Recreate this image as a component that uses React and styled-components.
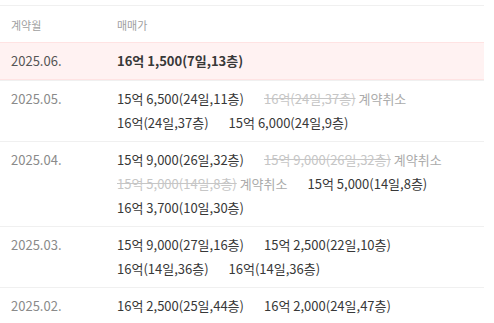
import React from 'react'
import styled, { createGlobalStyle } from 'styled-components'

const GlobalStyle = createGlobalStyle`
  body {
    margin: 0;
    background: #fff;
    font-family: 'Noto Sans CJK KR', 'Noto Sans', sans-serif;
  }
`

const Page = styled.div`
  padding-top: 5px;
`

const Table = styled.div`
  width: 484px;
  border-top: 1px solid #f0f0f0;
`

const HeaderRow = styled.div`
  display: flex;
  height: 36px;
  box-sizing: border-box;
  align-items: flex-end;
  padding-bottom: 9px;
  font-size: 11px;
  line-height: 16px;
  color: #a0a0a0;
`

const Row = styled.div`
  display: flex;
  align-items: flex-start;
  padding: 6px 0;
  border-top: 1px solid ${(p) => (p.$highlight ? '#ffe3e3' : '#f0f0f0')};
  border-bottom: ${(p) => (p.$highlight ? '1px solid #ffe3e3' : '0')};
  background: ${(p) => (p.$highlight ? '#fff2f2' : 'transparent')};
  & + & {
    border-top: ${(p) => (p.$afterHighlight ? '0' : '1px solid #f0f0f0')};
  }
`

const MonthCell = styled.div`
  width: 106px;
  padding-left: 11px;
  flex-shrink: 0;
  font-size: 13px;
  line-height: 24px;
  color: ${(p) => (p.$highlight ? '#555' : '#8a8a8a')};
`

const HeaderCell = styled.div`
  width: ${(p) => (p.$first ? '106px' : 'auto')};
  padding-left: ${(p) => (p.$first ? '11px' : '0')};
  flex-shrink: 0;
`

const Deals = styled.div`
  flex: 1;
  display: flex;
  flex-wrap: wrap;
  column-gap: 20px;
  font-size: 13px;
  line-height: 24px;
`

const Deal = styled.span`
  color: #383838;
  font-weight: ${(p) => (p.$bold ? 700 : 400)};
  white-space: nowrap;
`

const Cancelled = styled.span`
  white-space: nowrap;
  color: #ababab;
`

const Struck = styled.span`
  color: #c6c6c6;
  text-decoration: line-through;
`

const rows = [
  { month: '2025.06.', highlight: true, deals: [{ t: '16억 1,500(7일,13층)' }] },
  {
    month: '2025.05.',
    deals: [
      { t: '15억 6,500(24일,11층)' },
      { t: '16억(24일,37층)', cancel: true },
      { t: '16억(24일,37층)' },
      { t: '15억 6,000(24일,9층)' }
    ]
  },
  {
    month: '2025.04.',
    deals: [
      { t: '15억 9,000(26일,32층)' },
      { t: '15억 9,000(26일,32층)', cancel: true },
      { t: '15억 5,000(14일,8층)', cancel: true },
      { t: '15억 5,000(14일,8층)' },
      { t: '16억 3,700(10일,30층)' }
    ]
  },
  {
    month: '2025.03.',
    deals: [
      { t: '15억 9,000(27일,16층)' },
      { t: '15억 2,500(22일,10층)' },
      { t: '16억(14일,36층)' },
      { t: '16억(14일,36층)' }
    ]
  },
  {
    month: '2025.02.',
    deals: [{ t: '16억 2,500(25일,44층)' }, { t: '16억 2,000(24일,47층)' }]
  }
]

const App = () => (
  <Page>
    <GlobalStyle />
    <Table>
      <HeaderRow>
        <HeaderCell $first>계약월</HeaderCell>
        <HeaderCell>매매가</HeaderCell>
      </HeaderRow>
      {rows.map((row, i) => (
        <Row key={row.month} $highlight={row.highlight} $afterHighlight={i > 0 && rows[i - 1].highlight}>
          <MonthCell $highlight={row.highlight}>{row.month}</MonthCell>
          <Deals>
            {row.deals.map((d, j) =>
              d.cancel ? (
                <Cancelled key={j}>
                  <Struck>{d.t}</Struck> 계약취소
                </Cancelled>
              ) : (
                <Deal key={j} $bold={row.highlight}>
                  {d.t}
                </Deal>
              )
            )}
          </Deals>
        </Row>
      ))}
    </Table>
  </Page>
)

export default App
